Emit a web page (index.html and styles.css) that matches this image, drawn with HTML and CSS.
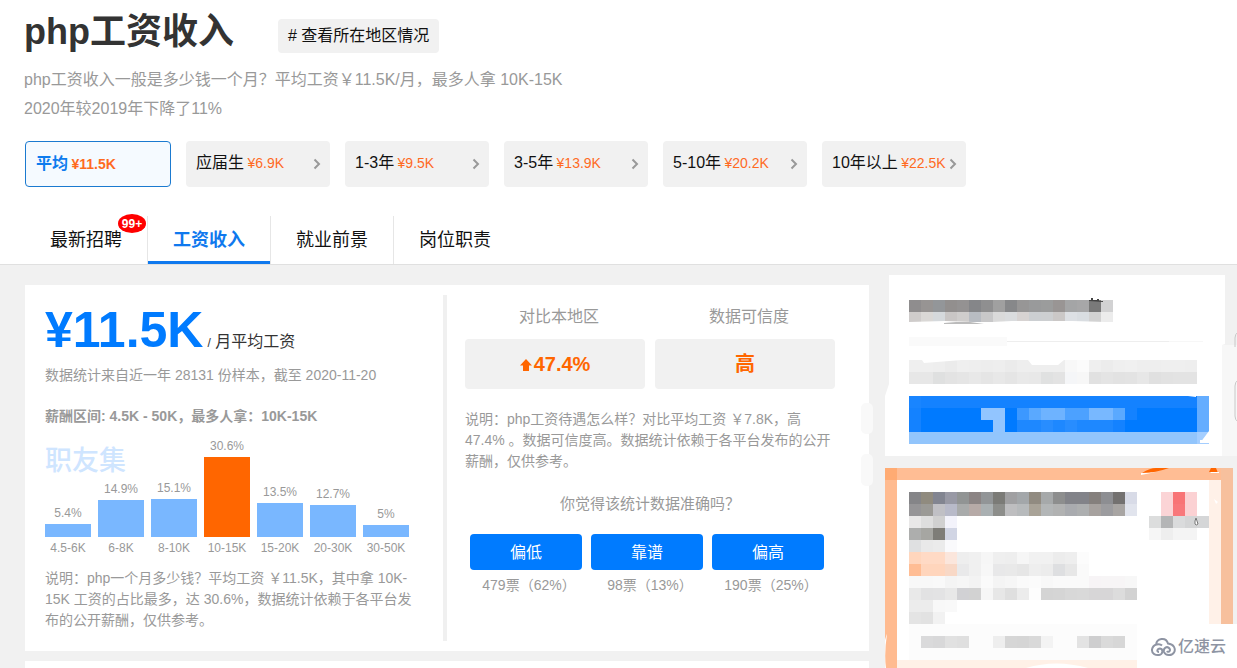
FILE: index.html
```html
<!DOCTYPE html>
<html lang="zh-CN">
<head>
<meta charset="utf-8">
<title>php工资收入</title>
<link rel="stylesheet" href="styles.css">
</head>
<body>
<header class="top">
  <div class="title-row">
    <h1 class="title">php工资收入</h1>
    <a class="region" href="#"># 查看所在地区情况</a>
  </div>
  <p class="intro">php工资收入一般是多少钱一个月？平均工资￥11.5K/月，最多人拿 10K-15K<br>2020年较2019年下降了11%</p>
  <nav class="levels">
    <a class="level level-on" href="#">平均 <span class="pay">¥11.5K</span></a>
    <a class="level" href="#">应届生 <span class="pay">¥6.9K</span><svg class="arrow" viewBox="0 0 8 12"><path d="M1.500 1.500 6 6l-4.500 4.500"/></svg></a>
    <a class="level" href="#">1-3年 <span class="pay">¥9.5K</span><svg class="arrow" viewBox="0 0 8 12"><path d="M1.500 1.500 6 6l-4.500 4.500"/></svg></a>
    <a class="level" href="#">3-5年 <span class="pay">¥13.9K</span><svg class="arrow" viewBox="0 0 8 12"><path d="M1.500 1.500 6 6l-4.500 4.500"/></svg></a>
    <a class="level" href="#">5-10年 <span class="pay">¥20.2K</span><svg class="arrow" viewBox="0 0 8 12"><path d="M1.500 1.500 6 6l-4.500 4.500"/></svg></a>
    <a class="level" href="#">10年以上 <span class="pay">¥22.5K</span><svg class="arrow" viewBox="0 0 8 12"><path d="M1.500 1.500 6 6l-4.500 4.500"/></svg></a>
  </nav>
  <nav class="tabs">
    <a class="tab" href="#">最新招聘<span class="badge">99+</span></a>
    <a class="tab tab-on" href="#">工资收入</a>
    <a class="tab" href="#">就业前景</a>
    <a class="tab" href="#">岗位职责</a>
  </nav>
</header>
<main class="page">
  <div class="content">
    <section class="card">
      <div class="salary">
        <p class="average"><strong class="amount">¥11.5K</strong><span class="unit"><small class="slash">/</small> 月平均工资</span></p>
        <p class="sample">数据统计来自近一年 28131 份样本，截至 2020-11-20</p>
        <h2 class="range">薪酬区间: 4.5K - 50K，最多人拿：10K-15K</h2>
        <div class="chart">
          <span class="brand">职友集</span>
          <div class="col"><span>5.4%</span><i class="bar" style="height:13px"></i><span class="axis">4.5-6K</span></div>
          <div class="col"><span>14.9%</span><i class="bar" style="height:37px"></i><span class="axis">6-8K</span></div>
          <div class="col"><span>15.1%</span><i class="bar" style="height:38px"></i><span class="axis">8-10K</span></div>
          <div class="col"><span>30.6%</span><i class="bar bar-top" style="height:80px"></i><span class="axis">10-15K</span></div>
          <div class="col"><span>13.5%</span><i class="bar" style="height:34px"></i><span class="axis">15-20K</span></div>
          <div class="col"><span>12.7%</span><i class="bar" style="height:32px"></i><span class="axis">20-30K</span></div>
          <div class="col"><span>5%</span><i class="bar" style="height:12px"></i><span class="axis">30-50K</span></div>
        </div>
        <p class="note">说明：php一个月多少钱？平均工资 ￥11.5K，其中拿 10K-<br>15K 工资的占比最多，达 30.6%，数据统计依赖于各平台发布的公开薪酬，仅供参考。</p>
      </div>
      <div class="compare">
        <dl class="stats">
          <div class="stat"><dt>对比本地区</dt><dd><svg class="up" viewBox="0 0 12 12"><path d="M6 0 12 6.500H9V12H3V6.500H0z"/></svg>47.4%</dd></div>
          <div class="stat"><dt>数据可信度</dt><dd>高</dd></div>
        </dl>
        <p class="note">说明：php工资待遇怎么样？对比平均工资 ￥7.8K，高 47.4% 。数据可信度高。数据统计依赖于各平台发布的公开薪酬，仅供参考。</p>
        <h3 class="question">你觉得该统计数据准确吗？</h3>
        <div class="votes">
          <div class="vote"><button type="button" class="vote-btn">偏低</button><span class="count">479票（62%）</span></div>
          <div class="vote"><button type="button" class="vote-btn">靠谱</button><span class="count">98票（13%）</span></div>
          <div class="vote"><button type="button" class="vote-btn">偏高</button><span class="count">190票（25%）</span></div>
        </div>
      </div>
    </section>
    <section class="card-next"></section>
  </div>
  <aside class="side">
    <svg class="art art-a" viewBox="885 275 352 181" aria-hidden="true">
      <path fill="#fff" d="M889 275h336v69l-3 1v33h3v78H885v-60l4-12z"/>
      <path fill="#f7f7f7" d="M1222 345h15v33h-15zM1222 378h15v78h-15z"/>
      <rect x="861" y="403" width="12" height="31" rx="5" fill="#f9f9f9"/>
      <rect x="861" y="454" width="12" height="32" rx="5" fill="#f9f9f9"/>
      <path fill="#fafafa" d="M909 337h98v9h-98z"/>
      <path fill="#eee" d="M1007 341h162v1h-162z"/>
      <path fill="#f7f7f7" d="M1169 341h34v1h-34z"/>
      <g id="pixels-a"></g>
      <path fill="#fff" d="M909 322l36-1 28 1h-12v1h-52zM972 323l40-2h60l34 1v2H985zM922 360h40l-38 3zM1028 360h36l-6 5h-26z"/>
      <path fill="#bbb" d="M944 323l12-1h14l14 2h-40z"/>
      <path fill="#444" d="M1089 301v-1h2v-2h2v2h4v-1h2v2h4v1z"/>
      <path fill="#fff" d="M1188 396h8v1zM1209 431v12h-9zM1200 440h3l-3 3z"/>
      <path fill="none" stroke="#c8c8c8" d="M1238 332q-3 2-3 6v9M1238 380q-3 2-3 6v30q0 4 3 6"/>
    </svg>
    <div class="promo">
      <svg class="art" viewBox="885 468 352 200" aria-hidden="true">
        <path fill="#fff" d="M897 480h324v188H897z"/>
        <path fill="#ffbb90" d="M885 468h12v200h-12z"/>
        <path fill="#fffefe" d="M885 640q2-7 2-6-3 20-1 34h-1z"/>
        <path fill="#ffbd94" d="M897 468h336v12H897z"/>
        <path fill="#ffab73" d="M885 468h12v12h-12z"/>
        <path fill="#f7c09d" d="M1221 468h12v156h-12z"/>
        <path fill="#fff1e8" d="M1209 480h12v144h-12z"/>
        <path fill="#fff" d="M1214 499l4 3-2 2z"/>
        <path fill="#ff6600" d="M1142 473q8-5 14-5h13q-14 5-27 5zM1209 472l2-4h5l2 5z"/>
        <path fill="#fff" d="M1141 473q9 0 15-1l-15 3zM1210 472h9v1h-8z"/>
        <path fill="#fcfcfc" d="M909 624h228v36H909z"/>
        <path fill="#fff1e7" d="M897 660h240v8H897z"/>
        <path fill="#fff" d="M1026 668q30-9 62 0z"/>
        <g id="pixels-b"></g>
        <path fill="#fff" stroke="#777" d="M1195 521l1-3 1 3 1 3q-2 2-3 0z"/>
        <path fill="#fff" d="M1137 624h100v44h-100z"/>
      </svg>
      <div class="mark">
        <svg class="cloud" viewBox="0 0 26 20"><path d="M12 8.500C10 6.500 3 6.500 2 12.500c-.5 4.500 4 6 7 5.500 4-.5 4.500-6 1-6.500-3 0-3.500 3.500-1 3.500M6 8C6.500 1 16-.5 18 6.500c6 .5 8 5.500 6 9-2 3.500-8.500 3.500-10-.5-1-4 3-6.500 5.500-3.500 1.500 2.500-1.500 4.500-2.500 2.500"/></svg>
        <span>亿速云</span>
      </div>
    </div>
  </aside>
</main>
<script src="mosaic.js"></script>
</body>
</html>
```
FILE: styles.css
```css
* { box-sizing: border-box; margin: 0; padding: 0; }

body {
  font-family: "Liberation Sans", "Noto Sans CJK SC", sans-serif;
  font-size: 14px;
  line-height: 21px;
  color: #999;
  background: #f1f1f1;
}

a { color: inherit; text-decoration: none; }

.top {
  background: #fff;
  border-bottom: 1px solid #e0e0e0;
  padding: 7px 25px 0 24px;
}

.title-row { display: flex; align-items: center; gap: 44px; }
.title { font-size: 36px; line-height: 50px; color: #333; }

.region {
  margin-top: 8px;
  padding: 0 10px;
  font-size: 16px;
  line-height: 34px;
  color: #111;
  background: #f1f1f1;
  border-radius: 4px;
}

.intro { margin-top: 8px; font-size: 16px; line-height: 29px; }

.levels { display: flex; gap: 15px; margin: 18px 0 0 1px; }

.level {
  position: relative;
  width: 144px;
  height: 46px;
  padding: 0 10px;
  font-size: 16px;
  line-height: 44px;
  color: #111;
  white-space: nowrap;
  background: #f1f1f1;
  border-radius: 4px;
}

.level-on {
  width: 146px;
  color: #0d7cee;
  font-weight: bold;
  background: #f5faff;
  border: 1px solid #1b7ad0;
}

.pay { margin-left: -1px; font-size: 14px; color: #ff6a1f; }

.arrow {
  position: absolute;
  top: 17px;
  right: 9px;
  width: 8px;
  height: 12px;
  fill: none;
  stroke: #999;
  stroke-width: 2;
}

.tabs { display: flex; margin: 29px 0 0 1px; }

.tab {
  position: relative;
  padding: 0 25px;
  font-size: 18px;
  line-height: 48px;
  color: #111;
  border-right: 1px solid #e6e6e6;
}

.tab:last-child { border-right: 0; }
.tab-on { color: #0f79ee; font-weight: bold; box-shadow: inset 0 -3px #0f79ee; }

.badge {
  position: absolute;
  top: -2px;
  right: 1px;
  width: 28px;
  height: 19px;
  font-size: 12px;
  font-weight: bold;
  line-height: 20px;
  text-align: center;
  color: #fff;
  background: #f00;
  border-radius: 50%;
}

.page { display: flex; gap: 16px; padding-left: 25px; }
.content { flex: 1; padding-top: 20px; }
.card { display: flex; padding: 10px 0; background: #fff; }
.card-next { height: 7px; margin-top: 10px; background: #fff; }

.salary {
  width: 422px;
  padding: 10px 30px 10px 20px;
  border-right: 4px solid #f0f0f0;
}

.average {
  display: flex;
  align-items: baseline;
  gap: 4px;
  height: 50px;
  line-height: 50px;
  white-space: nowrap;
}

.amount { font-size: 50px; color: #007bff; }
.unit { font-size: 16px; line-height: 20px; color: #333; }
.slash { font-size: 12px; }
.sample { margin-top: 10px; white-space: nowrap; }
.range { margin-top: 20px; font-size: 14px; line-height: 21px; }

.chart {
  position: relative;
  display: flex;
  gap: 7px;
  align-items: flex-end;
  height: 132px;
}

.brand {
  position: absolute;
  top: 16px;
  left: 0;
  font-size: 27px;
  font-weight: 500;
  line-height: 36px;
  color: #cfe5ff;
}

.col {
  position: relative;
  flex: none;
  display: flex;
  flex-direction: column;
  align-items: center;
  width: 46px;
  font-size: 12px;
  line-height: 22px;
  white-space: nowrap;
}

.bar { width: 46px; background: #79b7ff; }
.bar-top { background: #ff6600; }

.note { margin-top: 9px; }

.compare { flex: 1; padding: 11px 34px 0 18px; }
.stats { display: flex; gap: 10px; }
.stat { flex: 1; text-align: center; font-size: 16px; }
.stat dt { padding-left: 8px; }

.stat dd {
  margin-top: 12px;
  font-size: 20px;
  font-weight: bold;
  line-height: 50px;
  color: #ff6600;
  background: #f1f1f1;
  border-radius: 4px;
}

.up { width: 12px; height: 12px; margin-right: 2px; fill: #ff6600; }
.compare .note { margin-top: 20px; }

.question {
  margin-top: 21px;
  font-size: 15px;
  font-weight: normal;
  text-align: center;
}

.votes { display: flex; gap: 9px; margin-top: 20px; padding: 0 11px 0 5px; }
.vote { flex: 1; display: flex; flex-direction: column; text-align: center; gap: 5px; white-space: nowrap; }
.count { padding-left: 6px; }

.vote-btn {
  height: 36px;
  font: inherit;
  font-size: 16px;
  color: #fff;
  background: #007bff;
  border: 0;
  border-radius: 4px;
}

.side { display: flex; flex-direction: column; gap: 12px; width: 352px; padding-top: 10px; }
.art { display: block; width: 100%; }
.art-a { overflow: visible; }
.promo { position: relative; }

.mark {
  position: absolute;
  right: 11px;
  bottom: 10px;
  display: flex;
  align-items: center;
  gap: 2px;
  font-size: 16px;
  font-weight: 500;
  line-height: 22px;
  color: #8e94a3;
}

.cloud { width: 26px; height: 20px; fill: none; stroke: #8e94a3; stroke-width: 2; }
```
FILE: mosaic.js
```javascript
// Each row: x, y, height, then one colour per 12px cell ("-" leaves a gap).
var rowsA = [
  [909, 300, 12, "8f8d8e 979493 939699 928f8e 949292 858689 8f8f90 a0a0a0 87888a 979696 999a9b 9b9c9c 999594 a4a5a6 a7a7a8 797979 d2d2d3"],
  [909, 312, 10, "cfcccb dad8d6 d5d9dc c9c6c5 cfcdcc b8bcc2 c8c8c9 dadada dadcde d7d3d2 cccfd2 cdcfd1 cbc8c7 dde0e4 d9dde1 d2d2d2 ececec"],
  [909, 360, 12, "efefef efefef eeeeee ebebeb efefef eeeeee ededed eeeeee ebebeb eeeeee eeeeee eeeeee eeeeee f8f8f8 fbfbfb efefef ececec efefef f0f0f0 eeeeee eeeeee efefef efefef eeeeee"],
  [909, 372, 12, "e7e7e7 e7e7e7 dfe0e0 e3e3e3 e5e5e5 e8e8e8 e5e5e5 e8e8e8 e5e5e5 e9e9e9 e8e8e8 e0e1e1 e3e3e3 f5f6f8 f7f7f7 e1e1e1 e4e4e4 e2e2e2 e3e3e3 e7e7e7 e0e0e0 e2e2e2 e3e3e3 e3e3e3"],
  [909, 396, 12, "1985ff 1482ff 1482ff 1482ff 1482ff 1482ff 1482ff 1482ff 1482ff 1482ff 1482ff 1482ff 1482ff 1482ff 1482ff 1482ff 1482ff 1482ff 1482ff 1482ff 1482ff 1482ff 1482ff 1482ff 64adff"],
  [909, 408, 12, "1482ff 007aff 007aff 007aff 007aff 007aff 92c5ff 92c5ff 007aff 3c98ff 5aa9ff 6eb3ff 6eb3ff 4ca1ff 4ca1ff 78b8ff 78b8ff 5aa9ff 1482ff 007aff 007aff 007aff 007aff 007aff 64adff"],
  [909, 420, 12, "1482ff 007aff 007aff 007aff 007aff 007aff 007aff 92c5ff 007aff 1e88ff 1e88ff 288dff 1e88ff 288dff 1e88ff 1e88ff 1e88ff 1482ff 007aff 007aff 007aff 007aff 007aff 007aff 64adff"],
  [909, 432, 12, "92c5fc 92c5fc 92c5fc 92c5fc 92c5fc 92c5fc 92c5fc 92c5fc 92c5fc 92c5fc 92c5fc 92c5fc 92c5fc 92c5fc 92c5fc 92c5fc 92c5fc 92c5fc 92c5fc 92c5fc 92c5fc 92c5fc 92c5fc 92c5fc a4ceff"]
];
var rowsB = [
  [909, 492, 12, "858588 908b7f 828591 9899a5 919494 8b8484 929597 7b7b77 a0a0a2 a3a7aa 918b81 a6a9aa 8d8e8e 828389 828389 85807d 8d8e92 737170 d8dbe7"],
  [909, 504, 12, "969597 9b9a96 c0c0c5 b8bac9 a9abab b6aaa7 aab0b2 8d8e8b bebec0 b7babc a9a398 b3b6b7 b1b2b2 a9abaf adafb0 a7a29f 9c9c9f a8a5a3 e1e4ed"],
  [909, 516, 12, "e9e8e8 dedede d0d0d0 f3f3fb"],
  [909, 528, 12, "adaead a6a6a2 7e7d78 d1d5e4"],
  [909, 540, 12, "dfe0e1 e9e9e9 ebebeb fafafc"],
  [909, 552, 12, "ffd6bd ffdac5 ffdac5 fbe6dc eeeeee f0f0f0 f6f6f6 efefef eeeeee f6f6f6 f1f1f1 f1f1f1 ececec eeeeee fcfcfc"],
  [909, 564, 12, "ffbd94 ffd5bc ffd5bc f8d8c6 e9e9ea f0f0f0 f7f7f7 e8e8e9 e9e9e9 e6e6e6 eeeeee ececec dedfe1 e7e7e7 fafafa"],
  [909, 576, 12, "f8f8f8 f8f8f8 f9f9f9 f4f4f4 f6f6f6 f3f3f3 fafafa f4f4f4 f6f6f6 fafafa fbfbfb f8f8f8 fafafa fafafa fafafa f7f4f6 f7f5f6 f7f5f6 f7f7f7"],
  [909, 588, 12, "e9e9e9 e2e2e3 e3e3e4 e8e8e8 d1d1d4 d2d2d2 f6f6f6 e7e7e7 dfdfdf ececec fdfdfd d4d4d4 d5d5d5 d8d8d8 d9d9d9 d7d6d7 d7d6d7 dcdcdc d2d2d2"],
  [909, 600, 12, "ececec ececec f8f8f8 f9f9f9"],
  [909, 612, 12, "e4e4e4 e2e2e2 f2f2f2"],
  [921, 636, 12, "dadadb d8d8d9 e1e1e1 dfdfdf - - eeeeee d6d6d6 d5d5d5 d9d9d9 f3f3f3 - - e3e3e3 cececf dadada d7d7d7"],
  [1161, 492, 12, "fbd4d6 f87476 fbd1d3"],
  [1161, 504, 12, "fbd4d6 f8787b fbd1d3"],
  [1149, 516, 12, "dcdddd b4b5b6 dadbdc d4d5d6 d5d6d7"],
  [1149, 528, 12, "f6f6f6 eeeeee f4f4f4 f4f4f4"]
];

function paint(id, rows) {
  var group = document.getElementById(id);
  rows.forEach(function (row) {
    row[3].split(" ").forEach(function (color, i) {
      if (color === "-") return;
      var cell = document.createElementNS("http://www.w3.org/2000/svg", "rect");
      cell.setAttribute("x", row[0] + i * 12);
      cell.setAttribute("y", row[1]);
      cell.setAttribute("width", 12);
      cell.setAttribute("height", row[2]);
      cell.setAttribute("fill", "#" + color);
      group.appendChild(cell);
    });
  });
}

paint("pixels-a", rowsA);
paint("pixels-b", rowsB);
```
